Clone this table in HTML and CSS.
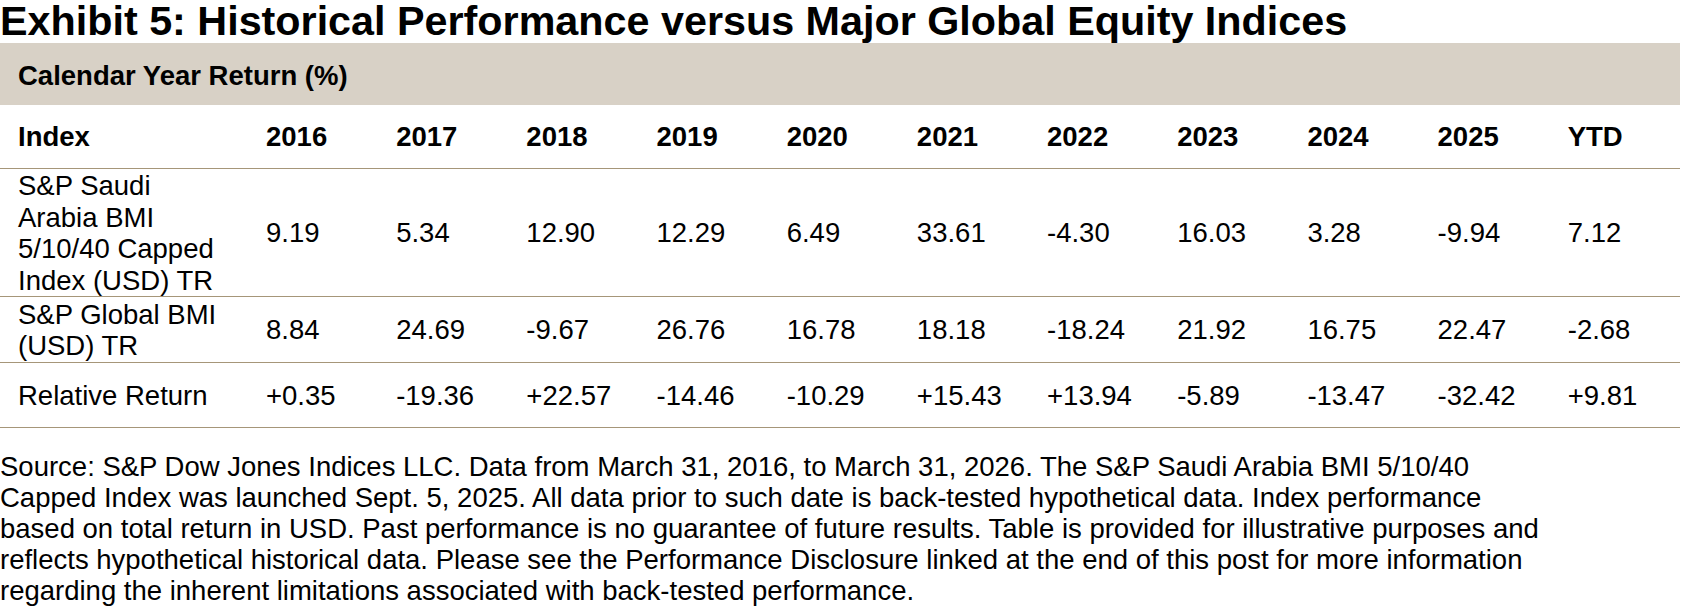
FILE: index.html
```html
<!DOCTYPE html>
<html lang="en">
<head>
<meta charset="utf-8">
<title>Exhibit 5</title>
<link rel="stylesheet" href="styles.css">
</head>
<body>
<div class="exhibit">
  <h1 class="title">Exhibit 5: Historical Performance versus Major Global Equity Indices</h1>
  <table class="perf">
    <colgroup>
      <col class="col-name">
      <col span="11">
    </colgroup>
    <thead>
      <tr class="band"><th colspan="12">Calendar Year Return (%)</th></tr>
      <tr class="head">
        <th>Index</th><th>2016</th><th>2017</th><th>2018</th><th>2019</th><th>2020</th><th>2021</th><th>2022</th><th>2023</th><th>2024</th><th>2025</th><th>YTD</th>
      </tr>
    </thead>
    <tbody>
      <tr>
        <td>S&amp;P Saudi Arabia BMI 5/10/40 Capped Index (USD) TR</td>
        <td>9.19</td><td>5.34</td><td>12.90</td><td>12.29</td><td>6.49</td><td>33.61</td><td>-4.30</td><td>16.03</td><td>3.28</td><td>-9.94</td><td>7.12</td>
      </tr>
      <tr class="fixed">
        <td>S&amp;P Global BMI (USD) TR</td>
        <td>8.84</td><td>24.69</td><td>-9.67</td><td>26.76</td><td>16.78</td><td>18.18</td><td>-18.24</td><td>21.92</td><td>16.75</td><td>22.47</td><td>-2.68</td>
      </tr>
      <tr class="fixed">
        <td>Relative Return</td>
        <td>+0.35</td><td>-19.36</td><td>+22.57</td><td>-14.46</td><td>-10.29</td><td>+15.43</td><td>+13.94</td><td>-5.89</td><td>-13.47</td><td>-32.42</td><td>+9.81</td>
      </tr>
    </tbody>
  </table>
  <p class="note">Source: S&amp;P Dow Jones Indices LLC. Data from March 31, 2016, to March 31, 2026. The S&amp;P Saudi Arabia BMI 5/10/40 Capped Index was launched Sept. 5, 2025. All data prior to such date is back-tested hypothetical data. Index performance based on total return in USD. Past performance is no guarantee of future results. Table is provided for illustrative purposes and reflects hypothetical historical data. Please see the Performance Disclosure linked at the end of this post for more information regarding the inherent limitations associated with back-tested performance.</p>
</div>
</body>
</html>
```

FILE: styles.css
```css
html, body {
  margin: 0;
  padding: 0;
  background: #ffffff;
}

body {
  font-family: "Liberation Sans", Arial, sans-serif;
  color: #000000;
}

.exhibit {
  width: 1684px;
}

.title {
  margin: 0;
  font-size: 41.3px;
  line-height: 43px;
  font-weight: bold;
  white-space: nowrap;
}

.perf {
  width: 1680px;
  table-layout: fixed;
  border-collapse: collapse;
  font-size: 27.5px;
  line-height: 31.5px;
}

.col-name {
  width: 248px;
}

.perf th,
.perf td {
  padding: 1.5px 20px 0 18px;
  text-align: left;
  vertical-align: middle;
}

.perf th {
  font-weight: bold;
}

.band th {
  background: #d8d1c6;
  height: 62px;
  padding-top: 4px;
  padding-bottom: 0;
  box-sizing: border-box;
}

.head th {
  height: 63px;
  box-sizing: border-box;
  padding-top: 0;
}

.head,
.perf tbody tr {
  border-bottom: 1px solid #a69679;
}

.perf tbody tr.fixed td {
  height: 65px;
  box-sizing: border-box;
}

.note {
  margin: 23px 0 0 0;
  width: 1562px;
  font-size: 27.5px;
  line-height: 31px;
}
```
